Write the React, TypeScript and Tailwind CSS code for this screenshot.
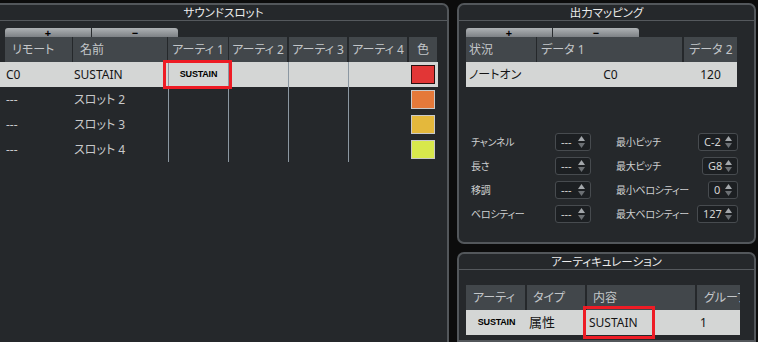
import React from "react";

const FONT = "font-['Noto_Sans','Noto_Sans_CJK_JP',sans-serif] [font-feature-settings:'palt']";

function Panel({ title, className, children }: { title: string; className?: string; children: React.ReactNode }) {
  return (
    <div className={"flex flex-col bg-[#25282b] border-2 border-[#53575b] " + (className ?? "")}>
      <div className="h-[15px] flex items-center justify-center text-[11.5px] leading-none text-[#ececec]">{title}</div>
      <div className="h-px bg-[#55595d]" />
      {children}
    </div>
  );
}

function PlusMinus() {
  return (
    <div className="flex h-[9px] w-[173px]">
      <div className="w-[86px] h-full rounded-tl-[3px] bg-gradient-to-b from-[#aeb2b5] to-[#7d8185] flex items-center justify-center text-[11px] leading-none text-black font-bold">+</div>
      <div className="w-px bg-[#2a2d30]" />
      <div className="flex-1 h-full rounded-tr-[3px] bg-gradient-to-b from-[#aeb2b5] to-[#7d8185] flex items-center justify-center text-[11px] leading-none text-black font-bold">−</div>
    </div>
  );
}

function Arrows() {
  return (
    <svg width="7" height="12" viewBox="0 0 7 12" className="shrink-0">
      <polygon points="0,5 3.5,0 7,5" fill="#a3a7ab" />
      <polygon points="0,7 7,7 3.5,12" fill="#6c7074" />
    </svg>
  );
}

function Spin({ value, w }: { value: string; w: number }) {
  return (
    <div
      className="shrink-0 h-[18px] flex items-center justify-between pl-[5px] pr-[5px] bg-[#1c1f22] border border-[#474b4f] rounded-[3px] text-[11px] tracking-normal text-[#d4d4d4]"
      style={{ width: w }}
    >
      <span>{value}</span>
      <Arrows />
    </div>
  );
}

export default function App() {
  const hdr = "h-[25px] bg-[#42474b] text-[12px] text-[#c3c6c9] flex items-center";
  const leftCols = "grid grid-cols-[68px_95px_61px_60px_60px_60px_28px]";
  const rowCols = "grid grid-cols-[73px_95px_60px_60px_60px_61px_29px]";
  const slots = [
    { r: "---", n: "スロット 2", c: "#e5793a" },
    { r: "---", n: "スロット 3", c: "#e4b83c" },
    { r: "---", n: "スロット 4", c: "#d8e84c" },
  ];
  return (
    <div className={"w-[758px] h-[342px] overflow-hidden bg-[#0c0c0c] pt-[3px] flex " + FONT}>
      {/* Left panel */}
      <Panel title="サウンドスロット" className="ml-[-2px] w-[451px] h-[345px] rounded-tr-[7px]">
        <div className="pt-[7px] pl-[5px]">
          <PlusMinus />
        </div>
        <div className={"pl-[5px] " + leftCols}>
          <div className={hdr + " mr-px pl-[7px]"}>リモート</div>
          <div className={hdr + " mr-px pl-[7px]"}>名前</div>
          <div className={hdr + " mr-[1px] justify-center"}>アーティ 1</div>
          <div className={hdr + " mr-[2px] justify-center"}>アーティ 2</div>
          <div className={hdr + " mr-[2px] justify-center"}>アーティ 3</div>
          <div className={hdr + " mr-[2px] justify-center"}>アーティ 4</div>
          <div className={hdr + " justify-center"}>色</div>
        </div>
        {/* Row 1 */}
        <div className={"h-[25px] w-[438px] " + rowCols}>
          <div className="bg-[#d4d6d5] text-[12px] text-[#151515] flex items-center pl-[6px]">C0</div>
          <div className="bg-[#d4d6d5] text-[12px] text-[#151515] flex items-center pl-px">SUSTAIN</div>
          <div className="bg-[#d4d6d5] relative flex items-center justify-center border-l border-[#8b97a1]">
            <span className="text-[9px] font-bold text-black font-['Liberation_Sans',sans-serif] tracking-[-0.2px]">SUSTAIN</span>
            <div className="absolute left-[-6px] right-[-4px] top-[-2px] bottom-[-2px] border-[3px] border-[#ee1c25]" />
          </div>
          <div className="bg-[#d4d6d5] border-l border-[#8b97a1]" />
          <div className="bg-[#d4d6d5] border-l border-[#8b97a1]" />
          <div className="bg-[#d4d6d5] border-l border-[#8b97a1]" />
          <div className="bg-[#d4d6d5] flex items-center pl-[2px]">
            <div className="w-[24px] h-[19px] bg-[#e23636] border border-[#2a1010]" />
          </div>
        </div>
        {slots.map((s) => (
          <div key={s.n} className={"h-[25px] w-[438px] " + rowCols}>
            <div className="text-[12px] text-[#c8c9ca] flex items-center pl-[6px]">{s.r}</div>
            <div className="text-[12px] text-[#c8c9ca] flex items-center pl-px">{s.n}</div>
            <div className="border-l border-[#8b97a1]" />
            <div className="border-l border-[#8b97a1]" />
            <div className="border-l border-[#8b97a1]" />
            <div className="border-l border-[#8b97a1]" />
            <div className="flex items-center pl-[2px]">
              <div className="w-[24px] h-[19px] border border-[#c9c9c9]" style={{ background: s.c }} />
            </div>
          </div>
        ))}
      </Panel>

      {/* Right column */}
      <div className="ml-[8px] w-[299px] flex flex-col gap-[8px]">
        <Panel title="出力マッピング" className="h-[241px] rounded-t-[7px] rounded-b-[7px]">
          <div className="pt-[7px] pl-[7px]">
            <PlusMinus />
          </div>
          <div className="pl-[7px] grid grid-cols-[71px_147px_53px]">
            <div className={hdr + " mr-px pl-[3px]"}>状況</div>
            <div className={hdr + " mr-[2px] pl-[4px]"}>データ 1</div>
            <div className={hdr + " pl-[5px]"}>データ 2</div>
          </div>
          <div className="ml-[7px] h-[25px] w-[271px] bg-[#d4d6d5] grid grid-cols-[71px_147px_53px] text-[12px] text-[#151515]">
            <div className="flex items-center pl-[3px]">ノートオン</div>
            <div className="flex items-center justify-center">C0</div>
            <div className="flex items-center justify-center">120</div>
          </div>
          <div className="mt-[46px] pl-[12px] pr-[16px] flex flex-col gap-[6px] text-[10px] tracking-[-0.3px] text-[#cfd0d1]">
            {[
              ["チャンネル", "最小ピッチ", "C-2", 40],
              ["長さ", "最大ピッチ", "G8", 36],
              ["移調", "最小ベロシティー", "0", 30],
              ["ベロシティー", "最大ベロシティー", "127", 41],
            ].map(([l, r, v, w]) => (
              <div key={l as string} className="h-[18px] flex items-center whitespace-nowrap">
                <div className="w-[84px]">{l}</div>
                <Spin value="---" w={36} />
                <div className="ml-[25px] flex-1">{r}</div>
                <Spin value={v as string} w={w as number} />
              </div>
            ))}
          </div>
        </Panel>

        <Panel title="アーティキュレーション" className="flex-1 rounded-t-[7px]">
          <div className="pt-[15px] pl-[7px] grid grid-cols-[61px_60px_110px_43px] w-[281px]">
            <div className={hdr + " mr-[2px] pl-[7px]"}>アーティ</div>
            <div className={hdr + " mr-[2px] pl-[6px]"}>タイプ</div>
            <div className={hdr + " mr-[2px] pl-[6px]"}>内容</div>
            <div className={hdr + " pl-[7px] overflow-hidden whitespace-nowrap"}>グループ</div>
          </div>
          <div className="ml-[7px] h-[25px] w-[274px] bg-[#d4d6d5] grid grid-cols-[61px_60px_110px_43px] text-[12px] text-[#151515]">
            <div className="flex items-center justify-center">
              <span className="text-[9px] font-bold text-black font-['Liberation_Sans',sans-serif] tracking-[-0.2px]">SUSTAIN</span>
            </div>
            <div className="flex items-center pl-[2px] text-[13px]">属性</div>
            <div className="relative flex items-center pl-[2px]">
              SUSTAIN
              <div className="absolute left-[-4px] w-[72px] top-[-4px] bottom-[-4px] border-[3px] border-[#ee1c25]" />
            </div>
            <div className="flex items-center pl-[3px]">1</div>
          </div>
        </Panel>
      </div>
    </div>
  );
}
